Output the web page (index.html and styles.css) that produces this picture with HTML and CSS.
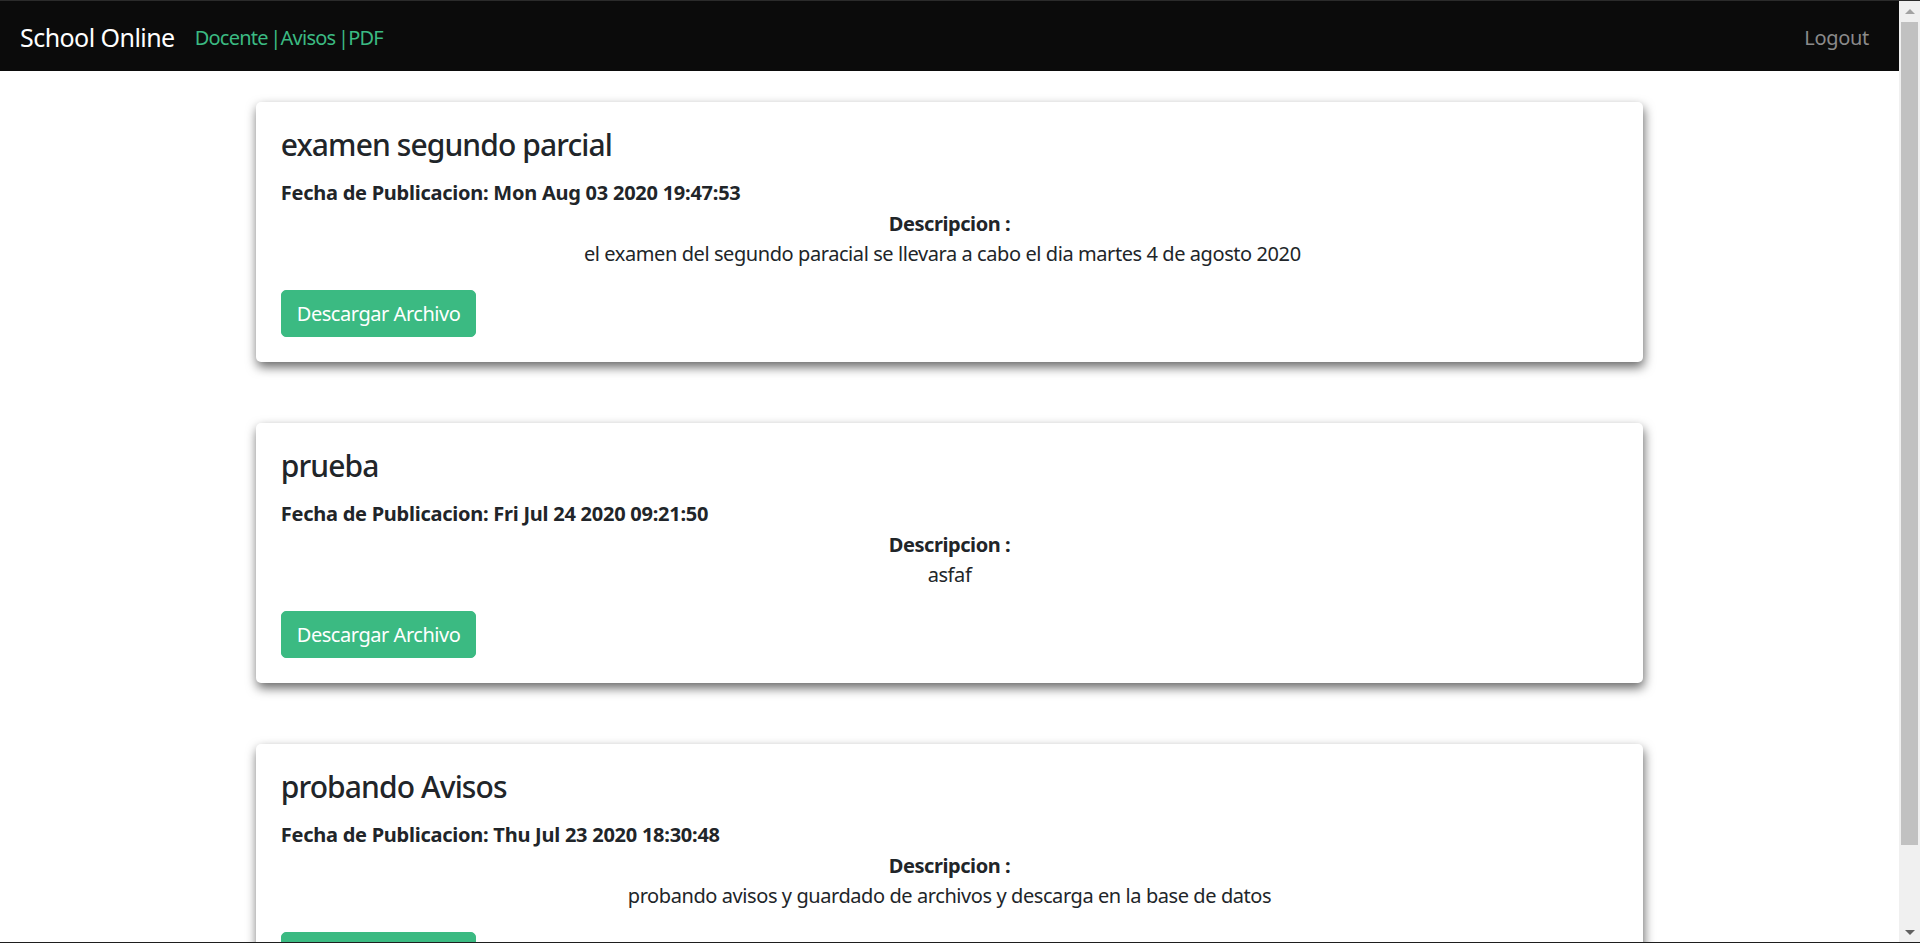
FILE: index.html
```html
<!DOCTYPE html>
<html lang="es">
<head>
<meta charset="utf-8">
<title>School Online</title>
<link rel="stylesheet" href="styles.css">
</head>
<body>
<div class="frame">
  <div class="edge-top"></div>
  <div class="window">
    <div class="page">
      <nav class="navbar">
        <a class="brand">School Online</a>
        <a class="nav-links">Docente |Avisos |PDF</a>
        <a class="logout">Logout</a>
      </nav>
      <main class="container">
        <section class="card">
          <h4 class="card-title">examen segundo parcial</h4>
          <p class="fecha">Fecha de Publicacion: Mon Aug 03 2020 19:47:53</p>
          <div class="desc">
            <p class="desc-label">Descripcion :</p>
            <p class="desc-text">el examen del segundo paracial se llevara a cabo el dia martes 4 de agosto 2020&nbsp;&nbsp;&nbsp;</p>
          </div>
          <div class="actions"><a class="btn">Descargar Archivo</a></div>
        </section>
        <section class="card">
          <h4 class="card-title">prueba</h4>
          <p class="fecha">Fecha de Publicacion: Fri Jul 24 2020 09:21:50</p>
          <div class="desc">
            <p class="desc-label">Descripcion :</p>
            <p class="desc-text">asfaf</p>
          </div>
          <div class="actions"><a class="btn">Descargar Archivo</a></div>
        </section>
        <section class="card">
          <h4 class="card-title">probando Avisos</h4>
          <p class="fecha">Fecha de Publicacion: Thu Jul 23 2020 18:30:48</p>
          <div class="desc">
            <p class="desc-label">Descripcion :</p>
            <p class="desc-text">probando avisos y guardado de archivos y descarga en la base de datos</p>
          </div>
          <div class="actions"><a class="btn">Descargar Archivo</a></div>
        </section>
      </main>
    </div>
    <div class="scrollbar">
      <div class="sb-arrow sb-up"></div>
      <div class="sb-track"><div class="sb-thumb"></div></div>
      <div class="sb-arrow sb-down"></div>
    </div>
  </div>
  <div class="edge-bottom"></div>
</div>
</body>
</html>
```
FILE: styles.css
```css
html, body {
  margin: 0;
  padding: 0;
  height: 100%;
  overflow: hidden;
}
body {
  font-family: "Noto Sans", "Open Sans", sans-serif;
  color: #212529;
  background: #fff;
}
.frame {
  height: 943px;
  display: flex;
  flex-direction: column;
}
.edge-top {
  height: 1px;
  background: #2b2b2b;
}
.edge-bottom {
  height: 1px;
  background: #1e1e1e;
}
.window {
  flex: 1;
  display: flex;
  min-height: 0;
}
.page {
  flex: 1;
  overflow: hidden;
  min-width: 0;
}
.navbar {
  height: 70px;
  box-sizing: border-box;
  background: #0b0b0b;
  display: flex;
  align-items: center;
  padding: 4px 20px 0;
}
.brand {
  color: #fff;
  font-size: 25px;
  line-height: 37.5px;
  letter-spacing: -0.55px;
  margin-right: 20px;
}
.nav-links {
  color: #3bba82;
  font-size: 20px;
  line-height: 30px;
  letter-spacing: -0.75px;
  word-spacing: -2px;
}
.logout {
  margin-left: auto;
  color: #8a8a8a;
  font-size: 20px;
  line-height: 30px;
  letter-spacing: -0.3px;
  padding: 0 10px;
}
.container {
  width: 1425px;
  box-sizing: border-box;
  margin: 0 auto;
  padding: 31px 18.75px 0;
  display: flex;
  flex-direction: column;
  gap: 61px;
}
.card {
  background: #fff;
  border-radius: 5px;
  padding: 25px;
  box-shadow: 1px 5px 11px rgba(0, 0, 0, 0.6);
}
.card-title {
  margin: 0 0 15px;
  font-size: 30px;
  font-weight: 500;
  line-height: 36px;
  letter-spacing: -0.9px;
}
.fecha {
  margin: 0;
  font-size: 20px;
  font-weight: 700;
  line-height: 30px;
  letter-spacing: -0.25px;
}
.desc {
  text-align: center;
  margin-top: 1px;
}
.desc p {
  margin: 0;
  font-size: 20px;
  line-height: 30px;
  letter-spacing: -0.42px;
}
.desc-label {
  font-weight: 700;
}
.actions {
  margin-top: 21px;
  display: flex;
}
.btn {
  display: inline-block;
  background: #3bba82;
  color: #fff;
  border: 1.25px solid #3bba82;
  border-radius: 5px;
  font-size: 20px;
  line-height: 30px;
  letter-spacing: -0.45px;
  padding: 7.5px 15px;
}
.scrollbar {
  width: 21px;
  background: #f0f0f0;
  display: flex;
  flex-direction: column;
  align-items: center;
}
.sb-arrow {
  height: 20px;
  width: 100%;
  display: flex;
  align-items: center;
  justify-content: center;
}
.sb-up::before {
  content: "";
  border-left: 5px solid transparent;
  border-right: 5px solid transparent;
  border-bottom: 5px solid #a3a3a3;
}
.sb-down::before {
  content: "";
  border-left: 5px solid transparent;
  border-right: 5px solid transparent;
  border-top: 5px solid #606060;
}
.sb-track {
  flex: 1;
  width: 100%;
  display: flex;
  flex-direction: column;
  padding: 1px 0 0;
  box-sizing: border-box;
}
.sb-thumb {
  margin: 0 2px;
  height: 823px;
  background: #c1c1c1;
}
```
